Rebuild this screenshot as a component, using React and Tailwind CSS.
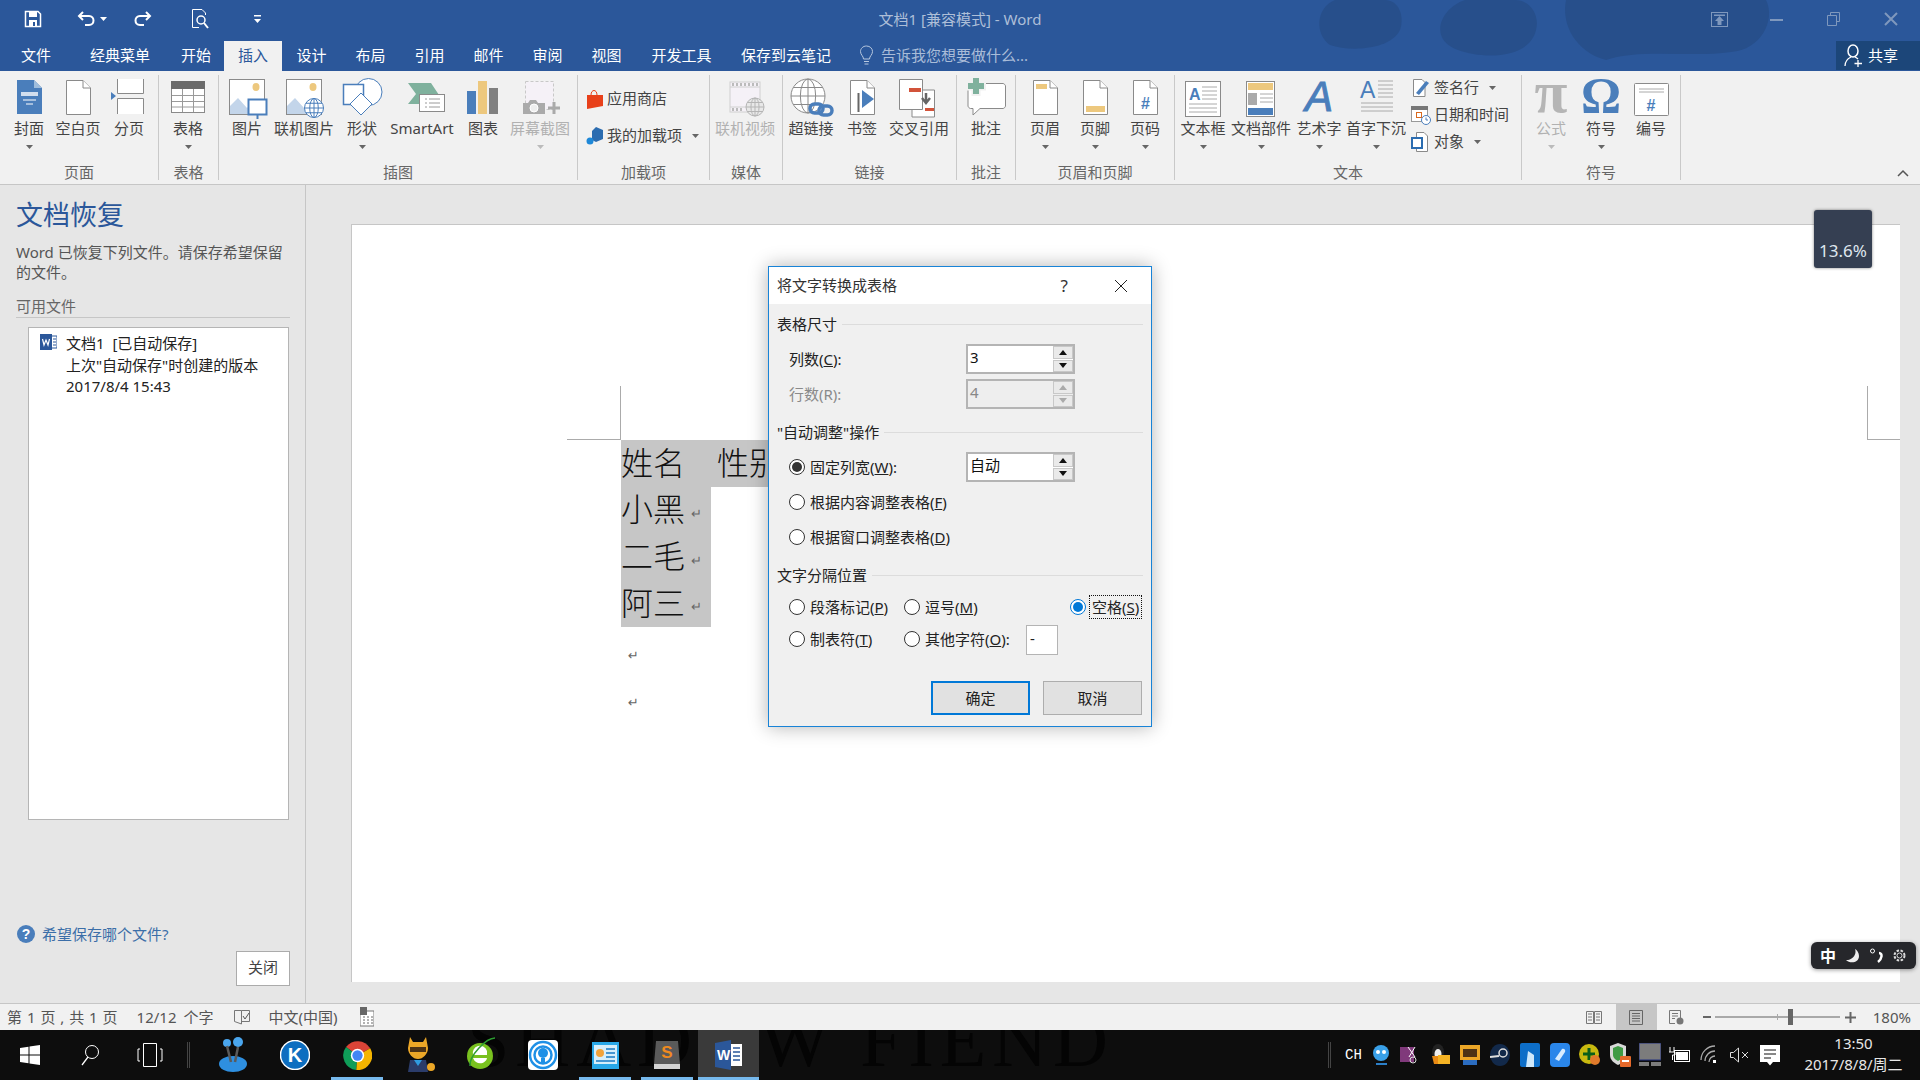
import React from 'react';

const Svg = ({ w = 48, h = 42, children, className = '' }) => (
  <svg width={w} height={h} viewBox={`0 0 ${w} ${h}`} className={`shrink-0 overflow-visible ${className}`}>
    {children}
  </svg>
);

const Page = ({ children, fill = '#fff', stroke = '#8a8a8a' }) => (
  <g>
    <path d="M12.5 4.5H29L36.5 12V38.5H12.5Z" fill={fill} stroke={stroke} />
    <path d="M29 4.5V12H36.5" fill="#fff" stroke={stroke} />
    {children}
  </g>
);

const Globe = ({ cx, cy, r, c = '#4a7ebb', fill = '#fff' }) => (
  <g fill="none" stroke={c}>
    <circle cx={cx} cy={cy} r={r} fill={fill} />
    <ellipse cx={cx} cy={cy} rx={r * 0.45} ry={r} />
    <path d={`M${cx} ${cy - r}V${cy + r}M${cx - r} ${cy}H${cx + r}M${cx - r * 0.85} ${cy - r * 0.5}H${cx + r * 0.85}M${cx - r * 0.85} ${cy + r * 0.5}H${cx + r * 0.85}`} />
  </g>
);

const Photo = ({ children }) => (
  <g>
    <rect x="6.5" y="3.5" width="35" height="35" fill="#fff" stroke="#8a8a8a" />
    <ellipse cx="33" cy="11" rx="3.5" ry="4" fill="#edc87e" />
    <path d="M7 38V30L15 22L24 32L28 28L34 38Z" fill="#c3d5ea" />
    {children}
  </g>
);

const icons = {
  cover: (
    <Svg>
      <path d="M12 4H29L37 12V38H12Z" fill="#4a7ebb" />
      <path d="M29 4L37 12H29Z" fill="#9fbddc" />
      <path d="M16 16H33V20H16Z" fill="#fff" opacity="0.75" />
      <path d="M18 24H31M21 28H28" stroke="#fff" />
    </Svg>
  ),
  blank: <Svg><Page /></Svg>,
  pageBreak: (
    <Svg>
      <path d="M12.5 3V17.5H38.5V3" fill="#fff" stroke="#8a8a8a" />
      <path d="M12.5 38V22.5H38.5V38" fill="#fff" stroke="#8a8a8a" />
      <path d="M6 16L11 20L6 24Z" fill="#4a7ebb" />
    </Svg>
  ),
  table: (
    <Svg>
      <rect x="7.5" y="5.5" width="33" height="31" fill="#fff" stroke="#8a8a8a" />
      <rect x="7" y="5" width="34" height="8" fill="#6b6b6b" />
      <path d="M18.5 13V36M29.5 13V36M8 19.5H40M8 25.5H40M8 31H40" stroke="#9a9a9a" />
    </Svg>
  ),
  picture: (
    <Svg>
      <Photo />
      <rect x="25.5" y="23.5" width="18" height="15" fill="#fff" stroke="#4a7ebb" strokeWidth="2" />
      <path d="M34.5 39V43" stroke="#4a7ebb" strokeWidth="2" />
    </Svg>
  ),
  online: (
    <Svg>
      <Photo />
      <Globe cx={34} cy={32} r={9.5} />
    </Svg>
  ),
  shape: (
    <Svg>
      <circle cx="30.5" cy="16" r="13.5" fill="#fff" stroke="#4a7ebb" />
      <rect x="5.5" y="8.5" width="20" height="20" fill="#fff" stroke="#4a7ebb" strokeWidth="1.5" />
      <path d="M23 17L34 28L23 39L12 28Z" fill="#fff" stroke="#4a7ebb" />
    </Svg>
  ),
  smartart: (
    <Svg>
      <path d="M10 7H33L41 19L33 28H10L18 18Z" fill="#7fb19d" />
      <rect x="21.5" y="18.5" width="25" height="17" fill="#fff" stroke="#8a8a8a" />
      <path d="M27 23H29M31 23H42M27 27H29M31 27H42M27 31H29M31 31H42" stroke="#9a9a9a" />
    </Svg>
  ),
  chart: (
    <Svg>
      <rect x="8" y="15" width="9" height="23" fill="#4a7ebb" />
      <rect x="19" y="5" width="9" height="33" fill="#edc87e" />
      <rect x="30" y="12" width="9" height="26" fill="#808080" />
    </Svg>
  ),
  screenshot: (
    <Svg>
      <rect x="9.5" y="5.5" width="28" height="28" fill="#f5f1f7" stroke="#c8c8c8" strokeDasharray="3 2" />
      <path d="M7 38V27H12L14 24H20L22 27H29V38Z" fill="#aaa" />
      <circle cx="18" cy="32" r="4" fill="#eee" stroke="#fff" />
      <path d="M38 26V38M32 32H44" stroke="#aaa" strokeWidth="3" />
    </Svg>
  ),
  video: (
    <Svg>
      <rect x="9" y="6" width="30" height="30" fill="#f5f1f7" stroke="#d0d0d0" />
      <path d="M9 11H39M9 31H39" stroke="#d0d0d0" />
      <path d="M12 7V10M16 7V10M20 7V10M24 7V10M28 7V10M32 7V10M36 7V10M12 32V35M16 32V35M20 32V35" stroke="#bbb" strokeWidth="2" />
      <Globe cx={34} cy={31} r={9} c="#b5b5b5" fill="#e8e8e8" />
    </Svg>
  ),
  hyperlink: (
    <Svg>
      <Globe cx={21} cy={20} r={17} c="#8a8a8a" />
      <g fill="none" stroke="#4a7ebb" strokeWidth="3.5">
        <rect x="23" y="28" width="13" height="9" rx="4.5" />
        <rect x="32" y="30" width="13" height="9" rx="4.5" />
      </g>
    </Svg>
  ),
  bookmark: (
    <Svg>
      <Page />
      <path d="M20.5 17V36" stroke="#666" strokeWidth="2" />
      <path d="M24 14L36 23L24 32Z" fill="#4a7ebb" />
    </Svg>
  ),
  crossref: (
    <Svg>
      <path d="M26.5 14H39.5V41H17V34" fill="#fff" stroke="#8a8a8a" />
      <path d="M4.5 3.5H27.5V33.5H4.5Z" fill="#fff" stroke="#8a8a8a" />
      <rect x="14" y="12" width="12" height="4" fill="#d2533a" />
      <rect x="30" y="32" width="9" height="3" fill="#d2533a" />
      <path d="M31 17V26M27 22L31 27L35 22" fill="none" stroke="#666" strokeWidth="2.5" />
    </Svg>
  ),
  comment: (
    <Svg>
      <path d="M8.5 7.5H41C42 7.500 43.500 9 43.500 10V30C43.500 31 42 32.500 41 32.500H18L11 39V32.500H8.500C7.500 32.500 6 31 6 30V10C6 9 7.500 7.500 8.500 7.500Z" fill="#fff" stroke="#8a8a8a" />
      <path d="M14 0V20M4 10H24" stroke="#f1f1f1" strokeWidth="9" />
      <path d="M14 2V18M6 10H22" stroke="#7fb19d" strokeWidth="6" />
    </Svg>
  ),
  header: <Svg><Page><rect x="15" y="8" width="11" height="5" fill="#edc87e" /></Page></Svg>,
  footer: <Svg><Page><rect x="15" y="30" width="19" height="6" fill="#edc87e" /></Page></Svg>,
  pageNumber: (
    <Svg>
      <Page>
        <text x="24.500" y="33" textAnchor="middle" fontSize="16" fontWeight="700" fontFamily="'Liberation Sans',sans-serif" fill="#4a7ebb">#</text>
      </Page>
    </Svg>
  ),
  textbox: (
    <Svg>
      <rect x="6.500" y="5.500" width="35" height="35" fill="#fff" stroke="#8a8a8a" />
      <text x="10" y="24" fontSize="16" fontWeight="700" fontFamily="'Liberation Sans',sans-serif" fill="#4a7ebb">A</text>
      <path d="M23 11H38M23 15H38M23 19H38M23 23H38M10 28H38M10 32H38M10 36H38" stroke="#aaa" />
    </Svg>
  ),
  parts: (
    <Svg>
      <rect x="9.500" y="5.500" width="28" height="35" fill="#fff" stroke="#8a8a8a" />
      <rect x="11" y="7" width="25" height="7" fill="#edc87e" />
      <rect x="11" y="17" width="9" height="12" fill="#aaa" />
      <path d="M23 18H36M23 22H36M23 26H36" stroke="#aaa" />
      <rect x="11" y="32" width="25" height="7" fill="#4a7ebb" />
    </Svg>
  ),
  wordart: (
    <Svg>
      <text x="24" y="35" textAnchor="middle" fontSize="42" fontStyle="italic" stroke="#4a7ebb" fontFamily="'Liberation Sans',sans-serif" fill="#4a7ebb">A</text>
    </Svg>
  ),
  dropcap: (
    <Svg>
      <text x="8" y="22" fontSize="23" fontFamily="'Liberation Sans',sans-serif" fill="#4a7ebb" fontWeight="500">A</text>
      <path d="M26 5H41M26 9H41M26 13H41M26 17H41M26 21H41M9 27H41M9 31H41M9 35H41" stroke="#aaa" />
    </Svg>
  ),
  pi: (
    <Svg>
      <text x="24" y="36" textAnchor="middle" fontSize="60" fontWeight="700" fontFamily="'Liberation Serif',serif" fill="#b5b5b5">π</text>
    </Svg>
  ),
  omega: (
    <Svg>
      <text x="24" y="36" textAnchor="middle" fontSize="50" fontWeight="700" fontFamily="'Liberation Serif',serif" fill="#4a7ebb">Ω</text>
    </Svg>
  ),
  numbering: (
    <Svg>
      <rect x="7.500" y="7.500" width="34" height="32" rx="1" fill="#fff" stroke="#8a8a8a" />
      <path d="M12 13H37M12 16H37" stroke="#aaa" />
      <text x="24" y="35" textAnchor="middle" fontSize="16" fontWeight="700" fontFamily="'Liberation Sans',sans-serif" fill="#4a7ebb">#</text>
    </Svg>
  ),
};

const Caret = ({ c = '#666' }) => (
  <svg width="7" height="4" viewBox="0 0 7 4" className="shrink-0">
    <path d="M0 0H7L3.500 4Z" fill={c} />
  </svg>
);

function RibbonItem({ w, icon, label, arrow, off }) {
  return (
    <div className={`${w} flex flex-col items-center pt-px`}>
      {icons[icon]}
      <div className={`h-5 text-[15px] leading-5 whitespace-nowrap ${off ? 'text-[#b1b1b1]' : 'text-[#444]'}`}>{label}</div>
      {arrow && (
        <div className="mt-[7px]">
          <Caret c={off ? '#bbb' : '#666'} />
        </div>
      )}
    </div>
  );
}

function Group({ w, label, items, pl = '', children }) {
  return (
    <div className={`${w} flex flex-col h-[105px] mt-1 border-r border-[#c9c9c9] shrink-0`}>
      <div className={`flex flex-1 min-h-0 ${pl}`}>
        {items && items.map((it) => <RibbonItem key={it.label} {...it} />)}
        {children}
      </div>
      <div className="h-4 leading-4 text-[15px] text-[#666] text-center whitespace-nowrap">{label}</div>
    </div>
  );
}

function SmallCmd({ icon, label, arrow, cls }) {
  return (
    <div className={`flex items-center h-[27px] ${cls}`}>
      {icon}
      <span className="ml-[3px] text-[15px] text-[#444] whitespace-nowrap">{label}</span>
      {arrow && <span className="ml-[10px]"><Caret /></span>}
    </div>
  );
}

const tabs = [
  ['文件', 'w-[72px]'],
  ['经典菜单', 'w-[96px]'],
  ['开始', 'w-[56px]'],
  ['插入', 'w-[58px] bg-[#f1f1f1] text-[#2b579a]'],
  ['设计', 'w-[59px]'],
  ['布局', 'w-[59px]'],
  ['引用', 'w-[59px]'],
  ['邮件', 'w-[59px]'],
  ['审阅', 'w-[59px]'],
  ['视图', 'w-[59px]'],
  ['开发工具', 'w-[91px]'],
  ['保存到云笔记', 'w-[118px]'],
];

function TitleArea() {
  return (
    <div className="relative bg-[#2b579a] h-[71px] overflow-hidden">
      <svg width="520" height="66" viewBox="0 0 520 66" className="absolute right-[120px] top-0">
        <g fill="#274f8b">
          <path d="M55 0C35 8 35 35 50 45C70 52 110 50 120 30C125 15 118 0 105 0Z" />
          <path d="M185 0C160 8 148 40 178 50C205 60 250 58 256 30C260 15 250 0 235 0Z" />
          <path d="M286 0H486C496 20 481 50 451 52C411 58 361 48 326 60C296 52 281 25 286 0Z" />
        </g>
      </svg>
      <div className="relative grid grid-cols-[1fr_auto_1fr] items-center h-[38px] mb-[3px]">
        <div className="flex items-center h-full text-white">
          <svg width="18" height="18" viewBox="0 0 18 18" className="ml-6 shrink-0">
            <path d="M1.500 1.500H14L16.500 4V16.500H1.500Z" fill="none" stroke="#fff" strokeWidth="1.500" />
            <rect x="5" y="2" width="8" height="5" fill="#fff" />
            <rect x="5" y="10" width="8" height="6" fill="#fff" />
            <rect x="9" y="12" width="2" height="4" fill="#2b579a" />
          </svg>
          <svg width="20" height="18" viewBox="0 0 20 18" className="ml-[35px] shrink-0">
            <path d="M6 2L2 6L6 10M2.500 6H12C18 6 18 15 12 15H8" fill="none" stroke="#fff" strokeWidth="2" />
          </svg>
          <span className="ml-[3px]"><Caret c="#fff" /></span>
          <svg width="20" height="18" viewBox="0 0 20 18" className="ml-[25px] shrink-0">
            <path d="M14 2L18 6L14 10M17.500 6H8C2 6 2 15 8 15H12" fill="none" stroke="#fff" strokeWidth="2" />
          </svg>
          <svg width="20" height="22" viewBox="0 0 20 22" className="ml-[38px] shrink-0">
            <path d="M12 1.500H2.500V19.500H9M12 1.500L15.500 5V7" fill="none" stroke="#fff" />
            <circle cx="11" cy="12" r="4" fill="none" stroke="#fff" strokeWidth="1.500" />
            <path d="M14 15L18 20" stroke="#fff" strokeWidth="2" />
          </svg>
          <svg width="7" height="8" viewBox="0 0 7 8" className="ml-[44px] shrink-0">
            <path d="M0 0H7V1.500H0ZM0 4H7L3.500 8Z" fill="#fff" />
          </svg>
        </div>
        <div className="text-[15px] text-[#aebfd8] whitespace-nowrap">文档1 [兼容模式] - Word</div>
        <div className="flex items-center justify-end h-full text-[#7f98bd]">
          <svg width="17" height="15" viewBox="0 0 17 15" className="shrink-0">
            <rect x="0.500" y="0.500" width="16" height="14" fill="none" stroke="currentColor" />
            <path d="M3 2.500H14V4H3ZM8.500 4L13 9H10.500V13H6.500V9H4Z" fill="currentColor" />
          </svg>
          <svg width="13" height="3" viewBox="0 0 13 3" className="ml-[42px] shrink-0">
            <rect width="13" height="2" y="1" fill="currentColor" />
          </svg>
          <svg width="13" height="14" viewBox="0 0 13 14" className="ml-[44px] shrink-0">
            <path d="M3.500 3.500V0.500H12.500V9.500H9.500M0.500 3.500H9.500V13.500H0.500Z" fill="none" stroke="currentColor" />
          </svg>
          <svg width="14" height="14" viewBox="0 0 14 14" className="ml-[44px] mr-[22px] shrink-0">
            <path d="M1 1L13 13M13 1L1 13" stroke="currentColor" strokeWidth="2" />
          </svg>
        </div>
      </div>
      <div className="relative flex items-end h-[30px] text-[15px] text-white">
        {tabs.map(([t, cls]) => (
          <div key={t} className={`${cls} h-[30px] pb-[2px] flex items-center justify-center whitespace-nowrap`}>{t}</div>
        ))}
        <svg width="15" height="22" viewBox="0 0 15 22" className="ml-[14px] mb-1 shrink-0">
          <path d="M4.500 14C4.500 11 1.500 10 1.500 6.500C1.500 3.500 4 1 7.500 1C11 1 13.500 3.500 13.500 6.500C13.500 10 10.500 11 10.500 14ZM5 16.500H10M5.500 19H9.500" fill="none" stroke="#b8c8df" />
        </svg>
        <div className="ml-[7px] h-[30px] pb-[2px] flex items-center text-[#a9bcd8] whitespace-nowrap">告诉我您想要做什么...</div>
        <div className="ml-auto w-[84px] h-[29px] mb-px bg-[#1c4679] flex items-center pl-[8px]">
          <svg width="20" height="24" viewBox="0 0 20 24" className="shrink-0">
            <ellipse cx="9" cy="7" rx="5" ry="6" fill="none" stroke="#fff" strokeWidth="1.500" />
            <path d="M1 22C1 16 5 14 7 13M11 13C12 13.500 13 14 14 15M14 16V23M10.500 19.500H18" fill="none" stroke="#fff" strokeWidth="1.300" />
          </svg>
          <span className="ml-[4px]">共享</span>
        </div>
      </div>
    </div>
  );
}

function Ribbon() {
  return (
    <div className="relative flex h-[114px] bg-[#f1f1f1] border-b border-[#c6c6c6]">
      <Group w="w-[159px]" pl="pl-1" label="页面" items={[
        { w: 'w-[50px]', icon: 'cover', label: '封面', arrow: true },
        { w: 'w-[48px]', icon: 'blank', label: '空白页' },
        { w: 'w-[54px]', icon: 'pageBreak', label: '分页' },
      ]} />
      <Group w="w-[60px]" label="表格" items={[{ w: 'w-[58px]', icon: 'table', label: '表格', arrow: true }]} />
      <Group w="w-[359px]" label="插图" items={[
        { w: 'w-[56px]', icon: 'picture', label: '图片' },
        { w: 'w-[58px]', icon: 'online', label: '联机图片' },
        { w: 'w-[58px]', icon: 'shape', label: '形状', arrow: true },
        { w: 'w-[62px]', icon: 'smartart', label: 'SmartArt' },
        { w: 'w-[60px]', icon: 'chart', label: '图表' },
        { w: 'w-[54px]', icon: 'screenshot', label: '屏幕截图', arrow: true, off: true },
      ]} />
      <Group w="w-[132px]" pl="pl-[8px] pt-[10px] flex-col gap-[10px]" label="加载项">
        <SmallCmd label="应用商店" cls="" icon={
          <svg width="18" height="22" viewBox="0 0 18 22" className="shrink-0">
            <path d="M5 7C5 1 11 1 11 7" fill="none" stroke="#e8401a" />
            <path d="M1 7H17V18L1 21Z" fill="#e8401a" />
          </svg>
        } />
        <SmallCmd label="我的加载项" arrow cls="" icon={
          <svg width="18" height="20" viewBox="0 0 18 20" className="shrink-0">
            <path d="M10 1L17 4V13L10 16L6 14V5Z" fill="#2b6cb0" />
            <circle cx="4" cy="15" r="3.500" fill="#1e88d8" />
          </svg>
        } />
      </Group>
      <Group w="w-[73px]" label="媒体" items={[{ w: 'w-[70px]', icon: 'video', label: '联机视频', off: true }]} />
      <Group w="w-[174px]" label="链接" items={[
        { w: 'w-[56px]', icon: 'hyperlink', label: '超链接' },
        { w: 'w-[46px]', icon: 'bookmark', label: '书签' },
        { w: 'w-[68px]', icon: 'crossref', label: '交叉引用' },
      ]} />
      <Group w="w-[59px]" label="批注" items={[{ w: 'w-[58px]', icon: 'comment', label: '批注' }]} />
      <Group w="w-[159px]" pl="pl-1" label="页眉和页脚" items={[
        { w: 'w-[50px]', icon: 'header', label: '页眉', arrow: true },
        { w: 'w-[50px]', icon: 'footer', label: '页脚', arrow: true },
        { w: 'w-[50px]', icon: 'pageNumber', label: '页码', arrow: true },
      ]} />
      <Group w="w-[347px]" label="文本">
        <RibbonItem w="w-[56px]" icon="textbox" label="文本框" arrow />
        <RibbonItem w="w-[60px]" icon="parts" label="文档部件" arrow />
        <RibbonItem w="w-[56px]" icon="wordart" label="艺术字" arrow />
        <RibbonItem w="w-[58px]" icon="dropcap" label="首字下沉" arrow />
        <div className="flex flex-col pl-[6px] -mt-px">
          <SmallCmd label="签名行" arrow cls="" icon={
            <svg width="20" height="20" viewBox="0 0 20 20" className="shrink-0">
              <path d="M2.500 1.500H11L14 4.500V18.500H2.500Z" fill="#fff" stroke="#8a8a8a" />
              <path d="M5 15L15 3L18 5L8 17Z" fill="#4a7ebb" />
            </svg>
          } />
          <SmallCmd label="日期和时间" cls="" icon={
            <svg width="20" height="20" viewBox="0 0 20 20" className="shrink-0">
              <rect x="0.500" y="1.500" width="16" height="15" fill="#fff" stroke="#999" />
              <rect x="0" y="1" width="17" height="4" fill="#777" />
              <rect x="5.500" y="7.500" width="5" height="5" fill="none" stroke="#d9691e" />
              <circle cx="15" cy="15" r="4.500" fill="#fff" stroke="#4a7ebb" />
              <path d="M15 12.500V15H17" fill="none" stroke="#4a7ebb" />
            </svg>
          } />
          <SmallCmd label="对象" arrow cls="" icon={
            <svg width="20" height="22" viewBox="0 0 20 22" className="shrink-0">
              <path d="M5.500 6V1.500H13L16.500 5V20.500H5.500V17" fill="#fff" stroke="#8a8a8a" />
              <rect x="1" y="7" width="10" height="10" fill="#fff" stroke="#2b6cb0" strokeWidth="2" />
            </svg>
          } />
        </div>
      </Group>
      <Group w="w-[159px]" pl="pl-1" label="符号" items={[
        { w: 'w-[50px]', icon: 'pi', label: '公式', arrow: true, off: true },
        { w: 'w-[50px]', icon: 'omega', label: '符号', arrow: true },
        { w: 'w-[50px]', icon: 'numbering', label: '编号' },
      ]} />
      <svg width="12" height="8" viewBox="0 0 12 8" className="absolute right-[11px] bottom-[7px]">
        <path d="M1 7L6 2L11 7" fill="none" stroke="#555" strokeWidth="1.500" />
      </svg>
    </div>
  );
}

function RecoveryPane() {
  return (
    <aside className="w-[306px] shrink-0 h-full border-r border-[#c6c6c6] pl-4 pr-[15px] flex flex-col relative">
      <h1 className="mt-[10px] text-[27px] leading-10 text-[#2b579a] whitespace-nowrap">文档恢复</h1>
      <p className="mt-[7px] text-[15px] leading-5 text-[#555] w-[275px]">Word 已恢复下列文件。请保存希望保留的文件。</p>
      <div className="mt-[14px] h-[22px] text-[15px] leading-5 text-[#666] border-b border-[#c6c6c6]">可用文件</div>
      <div className="mt-[9px] ml-3 h-[493px] w-[261px] bg-white border border-[#b5b5b5] flex pl-[11px] pt-[5px]">
        <svg width="17" height="16" viewBox="0 0 17 16" className="shrink-0 mt-px">
          <rect x="0" y="0" width="12" height="16" fill="#2b579a" />
          <path d="M12 2H17V14H12M13 5H16M13 8H16M13 11H16" fill="#fff" stroke="#2b579a" />
          <path d="M2.500 5L4 11L6 6L8 11L9.500 5" fill="none" stroke="#fff" strokeWidth="1.200" />
        </svg>
        <div className="ml-[9px] text-[15px] leading-[21.500px] text-[#222]">
          <div>文档1&nbsp;&nbsp;[已自动保存]</div>
          <div>上次"自动保存"时创建的版本</div>
          <div>2017/8/4 15:43</div>
        </div>
      </div>
      <div className="mt-[103px] ml-px flex items-center text-[15px] text-[#3b6ea8] whitespace-nowrap">
        <svg width="18" height="18" viewBox="0 0 18 18" className="shrink-0">
          <circle cx="9" cy="9" r="9" fill="#4a7ebb" />
          <text x="9" y="14" textAnchor="middle" fontSize="14" fontWeight="700" fontFamily="'Liberation Sans',sans-serif" fill="#fff">?</text>
        </svg>
        <span className="ml-[7px]">希望保存哪个文件?</span>
      </div>
      <div className="mt-[5px] self-end w-[54px] h-[35px] pb-[2px] bg-white border border-[#ababab] flex items-center justify-center text-[15px] text-[#444]">关闭</div>
    </aside>
  );
}

const Selected = ({ children, cls = 'w-[90px]' }) => (
  <div className={`${cls} h-[46.670px] pb-px bg-[#c6c6c6] flex items-center text-[32px] font-light text-[#111] whitespace-nowrap`}>{children}</div>
);

const Mark = ({ cls = '' }) => <span className={`text-[13px] leading-none text-[#666] font-['DejaVu_Sans',sans-serif] ${cls}`}>↵</span>;

function Document() {
  return (
    <div className="flex-1 min-w-0 h-full relative pl-[45px] pt-[39px]">
      <div className="relative w-[1549px] h-[758px] bg-white border-l border-t border-[#c6c6c6] pl-[269px] pt-[215px]">
        <div className="absolute left-[215px] top-[161px] w-[54px] h-[54px] border-r border-b border-[#ababab]"></div>
        <div className="absolute left-[1515px] top-[161px] w-[33px] h-[54px] border-l border-b border-[#ababab]"></div>
        <Selected cls="w-[200px]">姓名<span className="ml-8">性别</span></Selected>
        <Selected>小黑<Mark cls="ml-[6px] mt-2" /></Selected>
        <Selected>二毛<Mark cls="ml-[6px] mt-2" /></Selected>
        <Selected>阿三<Mark cls="ml-[6px] mt-2" /></Selected>
        <div className="pl-[7px] h-[47px] flex items-center pt-[10px]"><Mark /></div>
        <div className="pl-[7px] h-[47px] flex items-center pt-[10px]"><Mark /></div>
      </div>
    </div>
  );
}

function Spin({ value, off }) {
  const c = off ? '#aaa' : '#111';
  return (
    <div className={`w-[109px] h-[30px] border-2 border-[#b4b4b4] flex ${off ? 'bg-[#eee]' : 'bg-white'}`}>
      <div className={`flex-1 pl-[2px] text-[15px] leading-[22px] ${off ? 'text-[#888]' : 'text-[#111]'}`}>{value}</div>
      <div className="w-[20px] flex flex-col gap-px">
        <div className="flex-1 bg-[#eaeaea] border border-[#c8c8c8] flex items-center justify-center">
          <svg width="8" height="5" viewBox="0 0 8 5"><path d="M0 5L4 0L8 5Z" fill={c} /></svg>
        </div>
        <div className="flex-1 bg-[#eaeaea] border border-[#c8c8c8] flex items-center justify-center">
          <svg width="8" height="5" viewBox="0 0 8 5"><path d="M0 0L8 0L4 5Z" fill={c} /></svg>
        </div>
      </div>
    </div>
  );
}

function Radio({ checked, blue, children, cls = '' }) {
  const ring = blue ? 'border-[#0078d7]' : 'border-[#333]';
  const dot = blue ? 'bg-[#0078d7]' : 'bg-[#333]';
  return (
    <div className={`flex items-center shrink-0 ${cls}`}>
      <div className={`w-4 h-4 rounded-full border ${ring} bg-white flex items-center justify-center shrink-0`}>
        {checked && <div className={`w-[10px] h-[10px] rounded-full ${dot}`}></div>}
      </div>
      <div className="ml-[5px] text-[15px] text-[#222] whitespace-nowrap">{children}</div>
    </div>
  );
}

const Legend = ({ children, cls }) => (
  <div className={`flex items-center h-5 pr-2 ${cls}`}>
    <span className="text-[15px] text-[#222] whitespace-nowrap">{children}</span>
    <div className="flex-1 ml-[5px] h-px bg-[#dcdcdc]"></div>
  </div>
);

function ConvertDialog() {
  return (
    <div className="absolute left-[768px] top-[266px] w-[384px] h-[461px] border border-[#1883d7] bg-[#f0f0f0] shadow-[0_0_18px_rgba(0,0,0,0.3)] flex flex-col">
      <div className="h-[37px] bg-white flex items-center pl-2 shrink-0">
        <span className="text-[15px] text-[#333]">将文字转换成表格</span>
        <span className="ml-auto text-[17px] text-[#333]">?</span>
        <svg width="12" height="12" viewBox="0 0 12 12" className="ml-[47px] mr-[24px] shrink-0">
          <path d="M0 0L12 12M12 0L0 12" stroke="#222" />
        </svg>
      </div>
      <div className="pl-2 pt-[10px]">
        <Legend>表格尺寸</Legend>
        <div className="flex items-center mt-[10px] pl-3">
          <div className="w-[177px] text-[15px] text-[#222]">列数(<u>C</u>):</div>
          <Spin value="3" />
        </div>
        <div className="flex items-center mt-[5px] pl-3">
          <div className="w-[177px] text-[15px] text-[#8a8a8a]">行数(R):</div>
          <Spin value="4" off />
        </div>
        <Legend cls="mt-[13px]">"自动调整"操作</Legend>
        <div className="flex items-center mt-[10px] pl-3">
          <Radio checked cls="w-[177px]">固定列宽(<u>W</u>):</Radio>
          <Spin value="自动" />
        </div>
        <Radio cls="h-[30px] mt-[5px] pl-3">根据内容调整表格(<u>F</u>)</Radio>
        <Radio cls="h-[30px] mt-[5px] pl-3">根据窗口调整表格(<u>D</u>)</Radio>
        <Legend cls="mt-[13px]">文字分隔位置</Legend>
        <div className="flex items-center h-[30px] mt-[7px] pl-3">
          <Radio cls="w-[115px]">段落标记(<u>P</u>)</Radio>
          <Radio cls="w-[166px]">逗号(<u>M</u>)</Radio>
          <Radio checked blue><span className="outline-1 outline-dotted outline-[#111] outline-offset-1 px-px">空格(<u>S</u>)</span></Radio>
        </div>
        <div className="flex items-center h-[30px] mt-[3px] pl-3">
          <Radio cls="w-[115px] mb-[2px]">制表符(<u>T</u>)</Radio>
          <Radio cls="w-[122px] mb-[2px]">其他字符(<u>O</u>):</Radio>
          <div className="w-[32px] h-[30px] bg-white border border-[#b4b4b4] pl-[3px] text-[15px] leading-[24px] text-[#222]">-</div>
        </div>
        <div className="flex justify-end gap-[13px] mt-[26px] pr-[9px]">
          <div className="w-[99px] h-[34px] border-2 border-[#0078d7] bg-[#e1e1e1] flex items-center justify-center text-[15px] text-[#222]">确定</div>
          <div className="w-[99px] h-[34px] border border-[#adadad] bg-[#e1e1e1] flex items-center justify-center text-[15px] text-[#222]">取消</div>
        </div>
      </div>
    </div>
  );
}

function StatusBar() {
  return (
    <div className="h-[27px] bg-[#f1f1f1] border-t border-[#c6c6c6] flex items-center text-[15px] text-[#555] whitespace-nowrap">
      <span className="ml-[7px] [word-spacing:1px]">第 1 页 , 共 1 页</span>
      <span className="ml-[19px] [word-spacing:3px]">12/12 个字</span>
      <svg width="18" height="18" viewBox="0 0 18 18" className="ml-[20px] shrink-0">
        <path d="M1.500 2.500H8.500V16L1.500 13.500ZM8.500 2.500H16.500V13.500H8.500" fill="none" stroke="#777" />
        <path d="M10 8L12 11L16 5" fill="none" stroke="#555" />
      </svg>
      <span className="ml-[17px]">中文(中国)</span>
      <svg width="14" height="20" viewBox="0 0 14 20" className="ml-[23px] shrink-0">
        <rect x="0" y="4" width="14" height="15" fill="#fff" stroke="#777" />
        <rect x="0" y="0" width="7" height="8" fill="#666" />
        <path d="M3 10H5M7 10H9M11 10H13M3 13H5M7 13H9M11 13H13M3 16H5M7 16H9M11 16H13" stroke="#666" />
      </svg>
      <div className="ml-auto flex items-center h-full">
        <svg width="16" height="15" viewBox="0 0 16 15" className="shrink-0">
          <path d="M0.500 1.500H7.500V13.500H0.500ZM8.500 1.500H15.500V13.500H8.500ZM2 4H6M2 7H6M2 10H6M10 4H14M10 7H14M10 10H14" fill="none" stroke="#777" />
        </svg>
        <div className="ml-[14px] w-[41px] h-[26px] bg-[#c6c6c6] flex items-center justify-center">
          <svg width="14" height="15" viewBox="0 0 14 15">
            <path d="M0.500 0.500H13.500V14.500H0.500ZM3 3.500H11M3 6H11M3 8.500H11M3 11H11" fill="none" stroke="#666" />
          </svg>
        </div>
        <svg width="15" height="15" viewBox="0 0 15 15" className="ml-[12px] shrink-0">
          <path d="M0.500 0.500H11.500V8M6 13.500H0.500V0.500M3 3.500H9M3 6H9M3 8.500H6" fill="none" stroke="#777" />
          <circle cx="11" cy="11" r="3.500" fill="#777" />
        </svg>
        <div className="ml-[19px] w-[8px] h-[2px] bg-[#666]"></div>
        <div className="ml-[4px] w-[125px] relative h-[2px] bg-[#a9a9a9]">
          <div className="absolute left-[62px] -top-[2px] w-px h-[6px] bg-[#a9a9a9]"></div>
          <div className="absolute left-[73px] -top-[7px] w-[5px] h-[16px] bg-[#666]"></div>
        </div>
        <svg width="11" height="11" viewBox="0 0 11 11" className="ml-[5px] shrink-0">
          <path d="M5.500 0V11M0 5.500H11" stroke="#666" strokeWidth="2" />
        </svg>
        <span className="ml-[17px] mr-[9px]">180%</span>
      </div>
    </div>
  );
}

const TaskIcon = ({ children, w = 'w-[62px]', cls = '' }) => (
  <div className={`${w} h-full flex items-center justify-center relative shrink-0 ${cls}`}>{children}</div>
);

const Tray = ({ children }) => <div className="w-[30px] flex items-center justify-center shrink-0">{children}</div>;

function Taskbar() {
  return (
    <div className="relative h-[50px] bg-[#0d0d0d] flex items-center overflow-hidden text-white">
      <div className="absolute right-[806px] top-[-28px] font-['Liberation_Serif',serif] text-[76px] leading-none tracking-[6px] text-[#040404] whitespace-nowrap">SHADOW FIEND</div>
      <div className="relative flex items-center h-full w-full">
        <div className="w-[60px] flex justify-center shrink-0">
          <svg width="20" height="20" viewBox="0 0 20 20">
            <path d="M0 3L8.500 1.800V9.500H0ZM9.500 1.600L20 0V9.500H9.500ZM0 10.500H8.500V18.200L0 17ZM9.500 10.500H20V20L9.500 18.400Z" fill="#fff" />
          </svg>
        </div>
        <div className="w-[60px] flex justify-center shrink-0">
          <svg width="20" height="22" viewBox="0 0 20 22">
            <circle cx="12" cy="8" r="6.500" fill="none" stroke="#fff" />
            <path d="M8 13L2 21" stroke="#fff" strokeWidth="1.300" />
          </svg>
        </div>
        <div className="w-[60px] flex justify-center shrink-0">
          <svg width="26" height="26" viewBox="0 0 26 26">
            <path d="M6.500 1.500H19.500V24.500H6.500ZM3 7H1V19H3M23 7H25V19H23" fill="none" stroke="#fff" />
          </svg>
        </div>
        <div className="ml-[7px] w-[3px] h-[26px] border-x border-[#444] shrink-0"></div>
        <div className="ml-[12px] flex h-full items-center">
          <TaskIcon>
            <svg width="30" height="38" viewBox="0 0 30 38">
              <ellipse cx="15" cy="28" rx="14" ry="8" fill="#2e8fe0" />
              <circle cx="9" cy="7" r="4" fill="#4aa6ee" />
              <circle cx="20" cy="6" r="5" fill="#4aa6ee" />
              <path d="M9 10L13 26M20 11L17 26" stroke="#5a5a5a" strokeWidth="2.500" />
            </svg>
          </TaskIcon>
          <TaskIcon>
            <svg width="30" height="30" viewBox="0 0 30 30">
              <circle cx="15" cy="15" r="14.500" fill="#0d6ec0" stroke="#fff" strokeWidth="1.500" />
              <text x="15" y="22" textAnchor="middle" fontSize="20" fontWeight="700" fontFamily="'Liberation Sans',sans-serif" fill="#fff">K</text>
            </svg>
          </TaskIcon>
          <TaskIcon cls="after:absolute after:bottom-0 after:left-[5px] after:right-[5px] after:h-[3px] after:bg-[#76b9ed]">
            <svg width="29" height="29" viewBox="0 0 48 48">
              <path d="M24 24L45 12A24 24 0 0 0 5 10Z" fill="#db4437" />
              <path d="M24 24L5 10A24 24 0 0 0 22 48Z" fill="#0f9d58" />
              <path d="M24 24L22 48A24 24 0 0 0 45 12Z" fill="#f4b400" />
              <circle cx="24" cy="24" r="11" fill="#fff" />
              <circle cx="24" cy="24" r="8.500" fill="#4285f4" />
            </svg>
          </TaskIcon>
          <TaskIcon>
            <svg width="32" height="38" viewBox="0 0 32 38">
              <path d="M7 1L10 6H20L23 1L25 12C25 18 20 23 15 23C10 23 5 18 5 12Z" fill="#eca727" />
              <path d="M7 11H23V16H7Z" fill="#4d3315" />
              <path d="M7 24H23L25 36H5Z" fill="#2b3c6a" />
              <path d="M11 24L15 30L19 24Z" fill="#2f9be0" />
              <circle cx="28" cy="31" r="4" fill="#eca727" />
            </svg>
          </TaskIcon>
          <TaskIcon>
            <svg width="30" height="38" viewBox="0 0 30 38">
              <circle cx="14" cy="20" r="13" fill="#79c11f" />
              <path d="M7 19H21V15A7 7 0 0 0 7 19ZM7 22H21C20 28 10 30 7 22Z" fill="#fff" />
              <path d="M4 30C3 20 20 2 29 2" fill="none" stroke="#2e9c32" strokeWidth="1.500" />
            </svg>
          </TaskIcon>
          <TaskIcon>
            <svg width="30" height="30" viewBox="0 0 30 30">
              <rect width="30" height="30" rx="4" fill="#fff" />
              <circle cx="15" cy="15" r="13" fill="none" stroke="#1e90e6" strokeWidth="2.500" />
              <circle cx="15" cy="15" r="8.500" fill="none" stroke="#1e90e6" strokeWidth="2.500" />
              <circle cx="15" cy="13" r="5" fill="#1e90e6" />
              <path d="M13 18H17V23H13Z" fill="#1e90e6" />
            </svg>
          </TaskIcon>
          <TaskIcon cls="after:absolute after:bottom-0 after:left-[5px] after:right-[5px] after:h-[3px] after:bg-[#76b9ed]">
            <svg width="27" height="27" viewBox="0 0 27 27">
              <rect width="27" height="27" fill="#29a8e8" />
              <rect x="2" y="3" width="23" height="19" fill="#d6eefa" />
              <circle cx="8" cy="11" r="4" fill="#f2a33a" />
              <path d="M14 7H23M14 11H23M14 15H23M4 19H23" stroke="#1779c4" strokeWidth="1.500" />
            </svg>
          </TaskIcon>
          <TaskIcon cls="after:absolute after:bottom-0 after:left-[5px] after:right-[5px] after:h-[3px] after:bg-[#76b9ed]">
            <svg width="28" height="30" viewBox="0 0 28 30">
              <path d="M3 1H25L27 24V29H1V24Z" fill="#5a5a5a" />
              <rect x="1" y="24" width="26" height="5" fill="#d5d5d5" />
              <text x="14" y="18" textAnchor="middle" fontSize="17" fontWeight="700" fontFamily="'Liberation Sans',sans-serif" fill="#f08a1e">S</text>
            </svg>
          </TaskIcon>
          <TaskIcon w="w-[61px]" cls="bg-[#3a3a3a] after:absolute after:bottom-0 after:left-0 after:right-0 after:h-[3px] after:bg-[#76b9ed]">
            <svg width="28" height="30" viewBox="0 0 28 30">
              <path d="M0 3L16 0V30L0 27Z" fill="#2b579a" />
              <path d="M16 4H27V26H16" fill="#fff" />
              <path d="M18 8H25M18 12H25M18 16H25M18 20H25" stroke="#2b579a" strokeWidth="1.500" />
              <text x="8.500" y="20" textAnchor="middle" fontSize="14" fontWeight="700" fontFamily="'Liberation Sans',sans-serif" fill="#fff">W</text>
            </svg>
          </TaskIcon>
        </div>
        <div className="ml-[569px] w-[3px] h-[26px] border-x border-[#444] shrink-0"></div>
        <span className="ml-[14px] font-['Liberation_Mono',monospace] text-[14px] w-[20px] shrink-0">CH</span>
        <div className="flex items-center">
          <Tray><svg width="20" height="20" viewBox="0 0 20 20"><ellipse cx="11" cy="8" rx="8" ry="8" fill="#39a0e8" /><path d="M6 18H17V20H6Z" fill="#2b7fc8" /><circle cx="8" cy="7" r="2" fill="#fff" /><circle cx="14" cy="7" r="2" fill="#fff" /></svg></Tray>
          <Tray><svg width="20" height="20" viewBox="0 0 20 20"><rect x="0" y="2" width="14" height="15" fill="#80397b" /><circle cx="13" cy="15" r="3" fill="none" stroke="#ddd" /><path d="M8 2L15 12M15 2L9 12" stroke="#fff" /></svg></Tray>
          <Tray><svg width="20" height="22" viewBox="0 0 20 22"><ellipse cx="8" cy="8" rx="6" ry="8" fill="#222" /><ellipse cx="8" cy="10" rx="3.500" ry="5" fill="#eee" /><path d="M2 12H14L12 20H4Z" fill="#e88a14" /><rect x="8" y="11" width="12" height="9" fill="#f5b324" /></svg></Tray>
          <Tray><svg width="20" height="22" viewBox="0 0 20 22"><rect x="0" y="1" width="20" height="15" fill="#eca727" /><rect x="3" y="5" width="14" height="8" fill="#4d3315" /><rect x="3" y="16" width="14" height="5" fill="#2b6cc0" /></svg></Tray>
          <Tray><svg width="20" height="22" viewBox="0 0 20 22"><ellipse cx="10" cy="11" rx="10" ry="11" fill="#12294a" /><circle cx="13" cy="9" r="4" fill="none" stroke="#ddd" strokeWidth="1.500" /><path d="M0 13L9 12" stroke="#ddd" strokeWidth="2" /></svg></Tray>
          <Tray><svg width="20" height="24" viewBox="0 0 20 24"><rect width="20" height="24" rx="2" fill="#0d6ec8" /><path d="M8 8L14 12V24H6Z" fill="#cfe8fa" /></svg></Tray>
          <Tray><svg width="20" height="24" viewBox="0 0 20 24"><rect width="20" height="24" rx="4" fill="#2a86ea" /><path d="M5 16L12 6C14 5 16 7 15 9L9 18Z" fill="#d8ecff" /></svg></Tray>
          <Tray><svg width="22" height="22" viewBox="0 0 22 22"><circle cx="10" cy="10" r="10" fill="#c8b90f" /><path d="M10 4V16M4 10H16" stroke="#0a5e1a" strokeWidth="3" /><circle cx="16" cy="16" r="5" fill="#e07a2b" /></svg></Tray>
          <Tray><svg width="22" height="24" viewBox="0 0 22 24"><path d="M1 3L9 0L17 3V12C17 17 13 20 9 22C5 20 1 17 1 12Z" fill="#d8d8d8" /><path d="M4 5L9 3L14 5V12C14 15 11 17 9 18C7 17 4 15 4 12Z" fill="#3f9b45" /><rect x="11" y="13" width="11" height="11" rx="1" fill="#e5692a" /><rect x="13" y="17" width="7" height="2" fill="#fff" /></svg></Tray>
          <Tray><svg width="22" height="24" viewBox="0 0 22 24"><rect x="0" y="0" width="22" height="17" fill="#7c7c7c" stroke="#22307e" /><rect x="0" y="19" width="10" height="4" fill="#7c7c7c" /><rect x="12" y="19" width="10" height="4" fill="#7c7c7c" /></svg></Tray>
          <Tray><svg width="22" height="18" viewBox="0 0 22 18"><rect x="5.500" y="4.500" width="15" height="11" fill="none" stroke="#fff" /><rect x="7" y="6" width="12" height="8" fill="#fff" /><path d="M1 1V6M5 1V6M0 6H6V9H3.500V14" fill="none" stroke="#fff" /></svg></Tray>
          <Tray><svg width="20" height="20" viewBox="0 0 20 20"><path d="M1 15A14 14 0 0 1 15 1M5 16A10 10 0 0 1 15 6M9 17A6 6 0 0 1 15 11" fill="none" stroke="#aaa" strokeWidth="1.300" /><rect x="13" y="15" width="3" height="3" fill="#fff" /></svg></Tray>
          <Tray><svg width="20" height="16" viewBox="0 0 20 16"><path d="M0.500 5.500H3.500L8.500 1V15L3.500 10.500H0.500Z" fill="none" stroke="#ddd" /><path d="M12 5L18 11M18 5L12 11" stroke="#ddd" /></svg></Tray>
          <Tray><svg width="20" height="21" viewBox="0 0 20 21"><path d="M0 0H20V17H13L10 20.500L7 17H0Z" fill="#fff" /><path d="M4 5H16M4 9H16M4 13H11" stroke="#111" /></svg></Tray>
        </div>
        <div className="ml-auto mr-[9px] mb-[2px] w-[115px] text-center text-[15px] leading-[21px] text-[#e8e8e8] whitespace-nowrap">
          <div>13:50</div>
          <div>2017/8/8/周二</div>
        </div>
      </div>
    </div>
  );
}

export default function App() {
  return (
    <div className="relative w-[1920px] h-[1080px] overflow-hidden bg-[#e6e6e6] font-['Noto_Sans','Noto_Sans_CJK_SC',sans-serif] flex flex-col">
      <TitleArea />
      <Ribbon />
      <div className="flex flex-1 min-h-0 bg-[#e6e6e6]">
        <RecoveryPane />
        <Document />
      </div>
      <StatusBar />
      <Taskbar />
      <ConvertDialog />
      <div className="absolute left-[1814px] top-[210px] w-[58px] h-[58px] rounded-[3px] bg-[#353f52] shadow-[0_0_3px_rgba(0,0,0,0.5)] flex items-end justify-center pb-[5px] text-[17px] text-[#dfe6ee]">13.6%</div>
      <div className="absolute left-[1811px] top-[942px] w-[105px] h-[27px] rounded-[6px] bg-[#26272b] shadow-[0_1px_4px_rgba(0,0,0,0.4)] flex items-center justify-between px-[9px] text-white">
        <span className="text-[16px] font-bold leading-none">中</span>
        <svg width="15" height="15" viewBox="0 0 15 15"><path d="M10 1C12 6 8 12 1 12C5 16 14 15 14 8C14 5 12 2 10 1Z" fill="#eee" /></svg>
        <svg width="13" height="15" viewBox="0 0 13 15"><circle cx="2.500" cy="3" r="2" fill="none" stroke="#fff" /><path d="M9 5C13 5 12 11 8 14" fill="none" stroke="#fff" strokeWidth="2.500" /></svg>
        <svg width="15" height="15" viewBox="0 0 15 15"><circle cx="7.500" cy="7.500" r="5" fill="none" stroke="#ddd" strokeWidth="2" strokeDasharray="2.500 1.500" /><circle cx="7.500" cy="7.500" r="2.500" fill="none" stroke="#ddd" /></svg>
      </div>
    </div>
  );
}
